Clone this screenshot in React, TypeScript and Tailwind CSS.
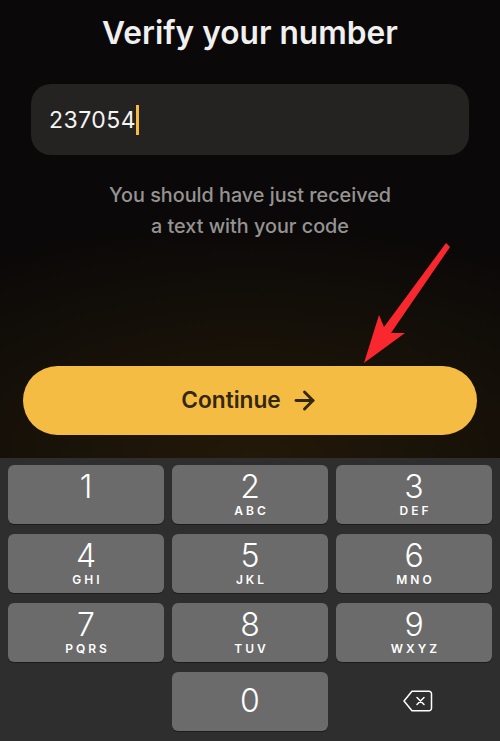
import { ArrowRight } from 'lucide-react'

const keys = [
  { digit: '1', letters: '' },
  { digit: '2', letters: 'ABC' },
  { digit: '3', letters: 'DEF' },
  { digit: '4', letters: 'GHI' },
  { digit: '5', letters: 'JKL' },
  { digit: '6', letters: 'MNO' },
  { digit: '7', letters: 'PQRS' },
  { digit: '8', letters: 'TUV' },
  { digit: '9', letters: 'WXYZ' },
]

function Key({ digit, letters }: { digit: string; letters: string }) {
  return (
    <div className="flex h-[59px] flex-col items-center rounded-[6px] bg-[#6b6b6b] text-white shadow-[0_1px_0_#1c1c1c]">
      <span className="mt-[4px] h-[35px] text-[32px] leading-[35px] font-light">{digit}</span>
      <span className="pl-[3px] text-[12px] leading-[14px] font-semibold tracking-[0.25em]">{letters}</span>
    </div>
  )
}

function DeleteIcon() {
  return (
    <svg width="30" height="22" viewBox="0 0 30 22" fill="none" stroke="white" strokeWidth="1.5" strokeLinejoin="round" strokeLinecap="round">
      <path d="M9 1.2H26a2.5 2.5 0 0 1 2.5 2.5v14.6a2.5 2.5 0 0 1-2.5 2.5H9L1 11Z" />
      <path d="M14 7.5l7 7M21 7.5l-7 7" />
    </svg>
  )
}

export default function App() {
  return (
    <div className="relative flex h-[741px] w-[500px] flex-col overflow-hidden bg-[#0a0808] font-['Inter',sans-serif]">
      <main className="flex h-[458px] flex-col bg-[radial-gradient(ellipse_480px_240px_at_50%_100%,#231909_0%,#140f08_60%,#0a0808_100%)]">
        <h1 className="mt-[13px] text-center text-[31.7px] leading-[40px] font-semibold text-[#f0f0f0]">Verify your number</h1>

        <div className="mx-[31px] mt-[31px] flex h-[71px] items-center rounded-[20px] bg-[#242322] pl-[18px]">
          <span className="pt-[2px] text-[23px] tracking-[0.02em] text-[#f4f4f4]">237054</span>
          <span className="h-[30px] w-[2.5px] bg-[#f2bb42]" />
        </div>

        <p className="mt-[25px] text-center text-[19.8px] leading-[31px] font-medium text-[#969492]">
          You should have just received
          <br />
          a text with your code
        </p>

        <button className="mx-[23px] mt-[124px] flex h-[69px] items-center justify-center gap-[9px] rounded-full bg-[#f4bc42] text-[22.7px] font-semibold text-[#33270c]">
          Continue
          <ArrowRight size={29} strokeWidth={2.4} />
        </button>
      </main>

      <section className="flex-1 bg-[#2e2e2e] px-[8px] pt-[7px]">
        <div className="grid grid-cols-3 gap-x-[8px] gap-y-[10px]">
          {keys.map((key) => (
            <Key key={key.digit} digit={key.digit} letters={key.letters} />
          ))}
          <div />
          <div className="flex h-[59px] items-center justify-center rounded-[6px] bg-[#6b6b6b] pb-[2px] text-[32px] font-light text-white shadow-[0_1px_0_#1c1c1c]">
            0
          </div>
          <div className="flex items-center justify-center pb-[1px] pl-[7px]">
            <DeleteIcon />
          </div>
        </div>
      </section>

      {/* red annotation arrow over the screen */}
      <svg className="absolute top-0 left-0" width="500" height="741" viewBox="0 0 500 741">
        <polygon points="446,243 450,247 391,333 405,333 364,363 379,315 384,327" fill="#f9282f" />
      </svg>
    </div>
  )
}
